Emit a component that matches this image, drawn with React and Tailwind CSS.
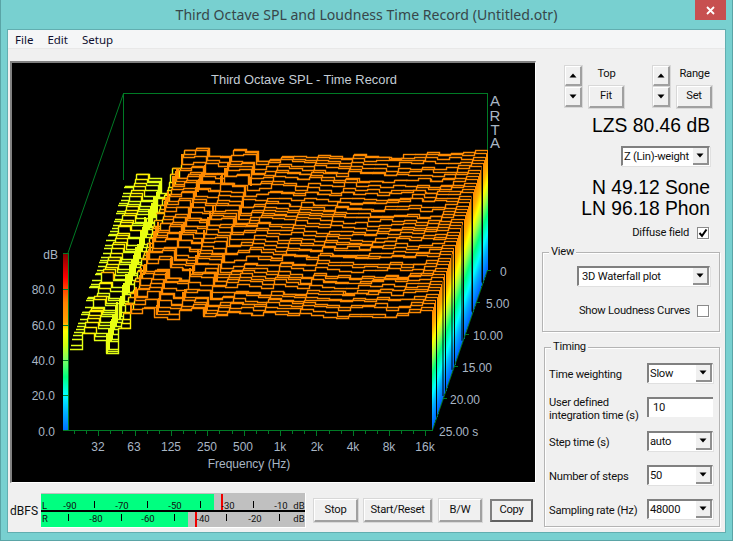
import React from "react";

/* seeded random so the waterfall is the same on every load */
const makeRng = (seed) => () => {
    seed |= 0;
    seed = (seed + 0x6d2b79f5) | 0;
    let t = Math.imul(seed ^ (seed >>> 15), 1 | seed);
    t = (t + Math.imul(t ^ (t >>> 7), 61 | t)) ^ t;
    return ((t ^ (t >>> 14)) >>> 0) / 4294967296;
};

const SCALE = 1.765;
const STEPS = 50;
const PROFILE = [
    47, 55, 52, 44, 58, 68, 70, 65, 64, 68, 68, 63, 64, 66, 65, 64, 66, 65, 64, 66, 65, 65, 64, 65, 65, 66, 65, 66, 67, 68,
];

const STOPS = [
    [0, "#0070ff"],
    [10, "#00b0ff"],
    [20, "#00ffff"],
    [30, "#00ff80"],
    [40, "#80ff60"],
    [48, "#d0ff10"],
    [56, "#ffff00"],
    [61, "#ffa000"],
    [72, "#ff8000"],
    [80, "#ff4000"],
    [86, "#ff0000"],
    [100, "#800000"],
];

const WALL_STOPS = [
    [0, "#0060ff"],
    [12, "#00b0ff"],
    [20, "#00ffff"],
    [31, "#00ff80"],
    [41, "#a0ff40"],
    [49, "#ffff00"],
    [57, "#ffb000"],
    [68, "#ff8000"],
    [100, "#ff8000"],
];

// trace lines only use a few colours in the reference
const traceColor = (db) => {
    if (db >= 61) return "#ff8a00";
    if (db >= 58) return "#ffb000";
    if (db >= 54) return "#ffee00";
    return "#e4ff14";
};

const rng = makeRng(4711);
const bandX = (k, dx) => Math.round(70 + 12.07 * k + dx);

// back trace first, so the nearer ones paint over it
const traces = [];
for (let i = 0; i < STEPS; i++) {
    const d = (STEPS - 1 - i) / (STEPS - 1);
    const dx = 55 * d;
    const floor = Math.round(430 - 160 * d);
    const offset = (rng() - 0.5) * 1.6;
    let walk = 0;
    const bands = PROFILE.map((base, k) => {
        walk = 0.6 * walk + (rng() - 0.5) * (k < 12 ? 2.4 : 1.5);
        const wave = 0.9 * Math.sin(i * 0.45 + k * 0.3);
        const db = k > 27 ? base + walk * 0.2 : base + offset + walk + wave;
        return {
            x0: bandX(k, dx),
            x1: bandX(k + 1, dx),
            y: Math.round(floor - db * SCALE),
            color: traceColor(db),
        };
    });
    traces.push({ dx, floor, bands });
}

// risers that show as thick slanted columns in the plot
const COLUMNS = [
    { k: 3, h: 20, keep: 0.8, color: "#eaff10" },
    { k: 5, h: 10, keep: 0.55, color: "#ff9000" },
    { k: 7, h: 9, keep: 0.5, color: "#ff8a00" },
    { k: 9, h: 8, keep: 0.4, color: "#ff8a00" },
    { k: 11, h: 8, keep: 0.4, color: "#ff8a00" },
];

const columnLines = [];
traces.forEach((t, i) => {
    COLUMNS.forEach((c) => {
        // rearmost traces have nothing behind them, a riser would stick out
        if (i < 4 || rng() > c.keep) return;
        const x = bandX(c.k, t.dx) + 1;
        const top = t.bands[c.k].y;
        columnLines.push(
            <line
                key={`${i}-${c.k}`}
                x1={x}
                x2={x}
                y1={top - c.h}
                y2={top}
                stroke={c.color}
                strokeWidth="2"
            />
        );
    });
});

const FREQS = [
    ["32", 98],
    ["63", 134],
    ["125", 171],
    ["250", 207],
    ["500", 243],
    ["1k", 280],
    ["2k", 317],
    ["4k", 353],
    ["8k", 389],
    ["16k", 425],
];
const DB_LABELS = ["0.0", "20.0", "40.0", "60.0", "80.0"];
const TIME_LABELS = [
    ["0", 500, 271],
    ["5.00", 486, 303],
    ["10.00", 473, 335],
    ["15.00", 462, 367],
    ["20.00", 450, 399],
    ["25.00 s", 439, 431],
];
const GREEN = "#007a25";
const LABEL = "#a9b6c4";

const Waterfall = () => (
    <svg
        viewBox="12 63 523 419"
        width="523"
        height="419"
        className="block font-['Liberation_Sans',sans-serif] text-[12px] tracking-normal"
    >
        <defs>
            <linearGradient id="bar" x1="0" y1="1" x2="0" y2="0">
                {STOPS.map(([db, c]) => (
                    <stop key={db} offset={db / 100} stopColor={c} />
                ))}
            </linearGradient>
            <linearGradient
                id="wall"
                gradientUnits="userSpaceOnUse"
                x1="432"
                y1="430"
                x2="377.7"
                y2="411.35"
            >
                {WALL_STOPS.map(([db, c]) => (
                    <stop key={db} offset={db / 100} stopColor={c} />
                ))}
            </linearGradient>
        </defs>

        <rect x="12" y="63" width="523" height="419" fill="#000" />

        <text x="304" y="84" textAnchor="middle" fontSize="12.9" fill="#c4ccd4">
            Third Octave SPL - Time Record
        </text>

        {/* ARTA mark */}
        <g fill={LABEL} fontSize="15" textAnchor="middle">
            <text x="495" y="106">A</text>
            <text x="495" y="121">R</text>
            <text x="495" y="135">T</text>
            <text x="495" y="148">A</text>
        </g>

        {/* frame */}
        <g stroke={GREEN} fill="none">
            <line x1="68" y1="253" x2="123.5" y2="93.5" />
            <path d="M123.5 180V93.5H487.5V270" shapeRendering="crispEdges" />
        </g>

        {/* colour bar */}
        <rect x="63" y="253" width="5" height="177" fill="url(#bar)" />

        {/* traces */}
        <g>
            {traces.map((t, i) => {
                const first = t.bands[0];
                const last = t.bands[29];
                const steps = t.bands.map((b) => `L${b.x0} ${b.y}L${b.x1} ${b.y}`).join("");
                const stripEnd = Math.round(last.x1 + 55 / (STEPS - 1));
                return (
                    <g key={i}>
                        <path
                            d={`M${first.x0} ${t.floor}${steps}L${last.x1} ${t.floor}Z`}
                            fill="#000"
                            shapeRendering="crispEdges"
                        />
                        <rect
                            x={last.x1}
                            y={last.y}
                            width={Math.max(stripEnd - last.x1, 1)}
                            height={t.floor - last.y}
                            fill="url(#wall)"
                            shapeRendering="crispEdges"
                        />
                        {t.bands.map((b, k) => {
                            const next = t.bands[k + 1];
                            return (
                                <path
                                    key={k}
                                    d={
                                        `M${b.x0} ${b.y + 0.5}L${b.x1 + 0.5} ${b.y + 0.5}` +
                                        (next ? `L${b.x1 + 0.5} ${next.y + 0.5}` : "")
                                    }
                                    stroke={b.color}
                                    strokeWidth="1.4"
                                    fill="none"
                                />
                            );
                        })}
                    </g>
                );
            })}
            <g shapeRendering="crispEdges">{columnLines}</g>
        </g>

        {/* time marks on the side wall */}
        {[443, 452, 462, 472, 482].map((x) => (
            <line
                key={x}
                x1={x}
                x2={x}
                y1={312 - ((x - 432) * 160) / 55}
                y2={428 - ((x - 432) * 160) / 55}
                stroke="#000"
            />
        ))}

        {/* axes */}
        <line x1="432.5" y1="430" x2="487.5" y2="270" stroke={GREEN} />
        <g stroke={GREEN} shapeRendering="crispEdges">
            <line x1="68.5" y1="253" x2="68.5" y2="431" />
            <line x1="63" y1="253.5" x2="68" y2="253.5" />
            <line x1="63" y1="430.5" x2="433" y2="430.5" />
            {[289, 325, 360, 395].map((y) => (
                <line key={y} x1="63" x2="68" y1={y + 0.5} y2={y + 0.5} />
            ))}
            {Array.from({ length: 30 }, (_, k) => {
                const x = Math.round(74 + 12.12 * k) + 0.5;
                return <line key={k} x1={x} x2={x} y1="431" y2={k % 3 === 2 ? 436 : 434} />;
            })}
            {[
                [487, 270],
                [476, 302],
                [465, 334],
                [454, 366],
                [443, 398],
            ].map(([x, y]) => (
                <line key={y} x1={x} x2={x + 4} y1={y + 0.5} y2={y + 0.5} />
            ))}
        </g>

        {/* labels */}
        <g fill={LABEL}>
            {DB_LABELS.map((l, i) => (
                <text key={l} x="55" y={435.5 - i * 35.3} textAnchor="end">
                    {l}
                </text>
            ))}
            <text x="58" y="259" textAnchor="end">dB</text>
            {FREQS.map(([l, x]) => (
                <text key={l} x={x} y="451" textAnchor="middle">
                    {l}
                </text>
            ))}
            {TIME_LABELS.map(([l, x, y]) => (
                <text key={l} x={x} y={y + 4.5}>
                    {l}
                </text>
            ))}
            <text x="249" y="468" textAnchor="middle">Frequency (Hz)</text>
        </g>
    </svg>
);

const LevelMeter = () => (
    <svg
        viewBox="41 493 265 35"
        width="265"
        height="35"
        className="block shrink-0 font-['Roboto',sans-serif] text-[9.5px] tracking-normal"
        shapeRendering="crispEdges"
    >
        <rect x="41" y="493" width="265" height="35" fill="#fff" />
        <rect x="41" y="493" width="264" height="34" fill="#c0c0c0" />
        <rect x="41" y="494" width="173" height="16" fill="#00ff80" />
        <rect x="41" y="512" width="147" height="15" fill="#00ff80" />
        <rect x="41" y="510" width="264" height="2" fill="#000" />
        <rect x="221" y="494" width="2" height="16" fill="#f00000" />
        <rect x="195" y="512" width="2" height="15" fill="#f00000" />
        <g stroke="#000">
            {[94, 147, 200, 253].map((x) => (
                <line key={x} x1={x + 0.5} x2={x + 0.5} y1="501" y2="508" />
            ))}
            {[68, 121, 174, 226, 279].map((x) => (
                <line key={x} x1={x + 0.5} x2={x + 0.5} y1="514" y2="521" />
            ))}
        </g>
        <g fill="#101010" textAnchor="middle" shapeRendering="auto">
            <text x="44.5" y="509">L</text>
            <text x="70" y="508.5">-90</text>
            <text x="122" y="508.5">-70</text>
            <text x="175" y="508.5">-50</text>
            <text x="228" y="508.5">-30</text>
            <text x="281" y="508.5">-10</text>
            <text x="299" y="508.5">dB</text>
            <text x="45" y="521.5">R</text>
            <text x="96" y="521.5">-80</text>
            <text x="148" y="521.5">-60</text>
            <text x="203" y="521.5">-40</text>
            <text x="255" y="521.5">-20</text>
            <text x="299" y="521.5">dB</text>
        </g>
    </svg>
);

const Triangle = ({ up }) => (
    <svg width="8" height="5" viewBox="0 0 8 5">
        <path d={up ? "M4 0.5L7.5 4.5H0.5Z" : "M0.5 0.5H7.5L4 4.5Z"} fill="#000" />
    </svg>
);

const raised =
    "bg-[#f0f0f0] border-t border-l border-t-[#ffffff] border-l-[#ffffff] border-r-2 border-b-2 border-r-[#a0a0a0] border-b-[#a0a0a0] shadow-[0_0_0_1px_#d8d8d8]";

const PushButton = ({ className, dark, children }) => (
    <button
        className={`flex items-center justify-center text-[#101010] ${
            dark
                ? "bg-[#f0f0f0] border-2 border-t-[#808080] border-l-[#808080] border-r-[#606060] border-b-[#606060]"
                : raised
        } ${className}`}
    >
        {children}
    </button>
);

const SpinButtons = () => (
    <div className="flex flex-col gap-px w-[17px]">
        <PushButton className="h-[20px] w-[17px]">
            <Triangle up />
        </PushButton>
        <PushButton className="h-[20px] w-[17px]">
            <Triangle />
        </PushButton>
    </div>
);

const DropDown = ({ value, className }) => (
    <div
        className={`flex items-stretch bg-white border-t-2 border-l-2 border-t-[#808080] border-l-[#808080] border-r border-b border-r-[#ffffff] border-b-[#ffffff] shadow-[1px_1px_0_#e0e0e0] ${className}`}
    >
        <span className="flex-1 pl-[1px] leading-[17px] text-[#101010] whitespace-nowrap overflow-hidden">
            {value}
        </span>
        <span className="w-[16px] flex items-center justify-center bg-[#f0f0f0] border-r-2 border-b-2 border-r-[#909090] border-b-[#909090]">
            <Triangle />
        </span>
    </div>
);

const CheckBox = ({ checked }) => (
    <span className="w-[12px] h-[12px] flex items-center justify-center bg-white border border-[#8a8a8a] shadow-[1px_1px_0_#ffffff]">
        {checked && (
            <svg width="10" height="10" viewBox="0 0 10 10">
                <path d="M1.5 5L4 7.8L8.5 1.5" stroke="#000" strokeWidth="2" fill="none" />
            </svg>
        )}
    </span>
);

const GroupBox = ({ title, className, children }) => (
    <div
        className={`relative border border-[#b4b4b4] shadow-[1px_1px_0_#ffffff,inset_1px_1px_0_#ffffff] ${className}`}
    >
        <span className="absolute left-[6px] -top-[9px] bg-[#f0f0f0] px-[2px] leading-[16px] text-[#101010]">
            {title}
        </span>
        {children}
    </div>
);

const TimingRow = ({ label, children }) => (
    <div className="h-[34px] flex justify-between pl-[4px] pr-[6px]">
        <span className="leading-[13px] pt-[5px] text-[#101010] whitespace-nowrap">{label}</span>
        {children}
    </div>
);

const App = () => {
    return (
        <div className="relative w-[733px] h-[541px] overflow-hidden bg-[#78d0d0] border-x border-b border-[#5aa4a6] font-['Roboto',sans-serif] text-[11.2px] tracking-[-0.25px]">

            {/* TITLE BAR */}
            <div className="h-[29px] flex items-center justify-center font-['Noto_Sans',sans-serif] text-[14.1px] tracking-normal text-[#37474a]">
                Third Octave SPL and Loudness Time Record (Untitled.otr)
            </div>
            <button className="absolute left-[694px] top-0 w-[31px] h-[20px] flex items-center justify-center bg-[#c75050]">
                <svg width="9" height="9" viewBox="0 0 9 9">
                    <path d="M1 1L8 8M8 1L1 8" stroke="#fff" strokeWidth="1.8" />
                </svg>
            </button>

            {/* CLIENT AREA */}
            <div className="ml-[6px] w-[719px] h-[504px] bg-[#f0f0f0] border border-[#62aeb0]">

                {/* MENU */}
                <div className="h-[19px] pt-[1px] flex items-center gap-[14px] pl-[7px] bg-[#f5f6f7] border-b border-[#e8e8e8] font-['Noto_Sans',sans-serif] text-[11.5px] tracking-normal text-[#101030]">
                    <span>File</span>
                    <span>Edit</span>
                    <span>Setup</span>
                </div>

                <div className="flex">

                    {/* LEFT: PLOT AND METER */}
                    <div className="w-[533px] pl-[2px] pt-[12px]">
                        <div className="w-[526px] border-t-2 border-l-2 border-t-[#808080] border-l-[#808080] border-r border-b border-r-[#ffffff] border-b-[#ffffff]">
                            <Waterfall />
                        </div>

                        <div className="flex items-center h-[50px] pt-[5px]">
                            <span className="w-[31px] text-[12px] tracking-normal text-[#101010]">dBFS</span>
                            <LevelMeter />
                            <div className="flex ml-[8px]">
                                <PushButton className="w-[44px] h-[23px]">Stop</PushButton>
                                <PushButton className="w-[68px] h-[23px] ml-[6px]">Start/Reset</PushButton>
                                <PushButton className="w-[43px] h-[23px] ml-[7px]">B/W</PushButton>
                                <PushButton dark className="w-[43px] h-[23px] ml-[8px]">Copy</PushButton>
                            </div>
                        </div>
                    </div>

                    {/* RIGHT: CONTROLS */}
                    <div className="w-[184px] pt-[17px]">
                        <div className="flex pl-[24px]">
                            <SpinButtons />
                            <div className="ml-[7px] w-[35px]">
                                <div className="h-[20px] pt-[1px] leading-[14px] text-center text-[#101010]">Top</div>
                                <PushButton className="w-[35px] h-[22px]">Fit</PushButton>
                            </div>
                            <div className="ml-[29px]">
                                <SpinButtons />
                            </div>
                            <div className="ml-[7px] w-[35px]">
                                <div className="h-[20px] pt-[1px] leading-[14px] text-center text-[#101010] whitespace-nowrap">Range</div>
                                <PushButton className="w-[35px] h-[22px]">Set</PushButton>
                            </div>
                        </div>

                        <div className="mt-[6px] pr-[15px] text-right font-['Liberation_Sans',sans-serif] text-[19.3px] tracking-normal leading-[24px] text-black">
                            LZS 80.46 dB
                        </div>

                        <div className="mt-[8px] flex justify-end pr-[15px]">
                            <DropDown value="Z (Lin)-weight" className="w-[89px] h-[20px]" />
                        </div>

                        <div className="mt-[11px] pr-[15px] text-right font-['Liberation_Sans',sans-serif] text-[19.3px] tracking-normal leading-[21px] text-black">
                            <div>N 49.12 Sone</div>
                            <div>LN 96.18 Phon</div>
                        </div>

                        <div className="mt-[6px] h-[16px] flex items-center justify-end gap-[8px] pr-[16px] text-[#101010]">
                            <span>Diffuse field</span>
                            <CheckBox checked />
                        </div>

                        {/* VIEW */}
                        <GroupBox title="View" className="mt-[11px] ml-[1px] w-[178px] h-[80px]">
                            <div className="pt-[13px] pl-[34px]">
                                <DropDown value="3D Waterfall plot" className="w-[133px] h-[20px] pl-[2px]" />
                            </div>
                            <div className="mt-[17px] flex items-center justify-end gap-[7px] pr-[10px] text-[#101010]">
                                <span>Show Loudness Curves</span>
                                <CheckBox />
                            </div>
                        </GroupBox>

                        {/* TIMING */}
                        <GroupBox title="Timing" className="mt-[15px] ml-[3px] w-[176px] h-[180px]">
                            <div className="pt-[15px]">
                                <TimingRow label="Time weighting">
                                    <DropDown value="Slow" className="w-[66px] h-[20px]" />
                                </TimingRow>
                                <TimingRow
                                    label={
                                        <span className="block -mt-[6px]">
                                            User defined
                                            <br />
                                            integration time (s)
                                        </span>
                                    }
                                >
                                    <div className="w-[66px] h-[20px] pl-[4px] leading-[17px] bg-white text-[#101010] border-t-2 border-l-2 border-t-[#808080] border-l-[#808080]">
                                        10
                                    </div>
                                </TimingRow>
                                <TimingRow label="Step time (s)">
                                    <DropDown value="auto" className="w-[66px] h-[20px]" />
                                </TimingRow>
                                <TimingRow label="Number of steps">
                                    <DropDown value="50" className="w-[66px] h-[20px]" />
                                </TimingRow>
                                <TimingRow label="Sampling rate (Hz)">
                                    <DropDown value="48000" className="w-[66px] h-[20px]" />
                                </TimingRow>
                            </div>
                        </GroupBox>
                    </div>
                </div>
            </div>
        </div>
    );
};

export default App;
